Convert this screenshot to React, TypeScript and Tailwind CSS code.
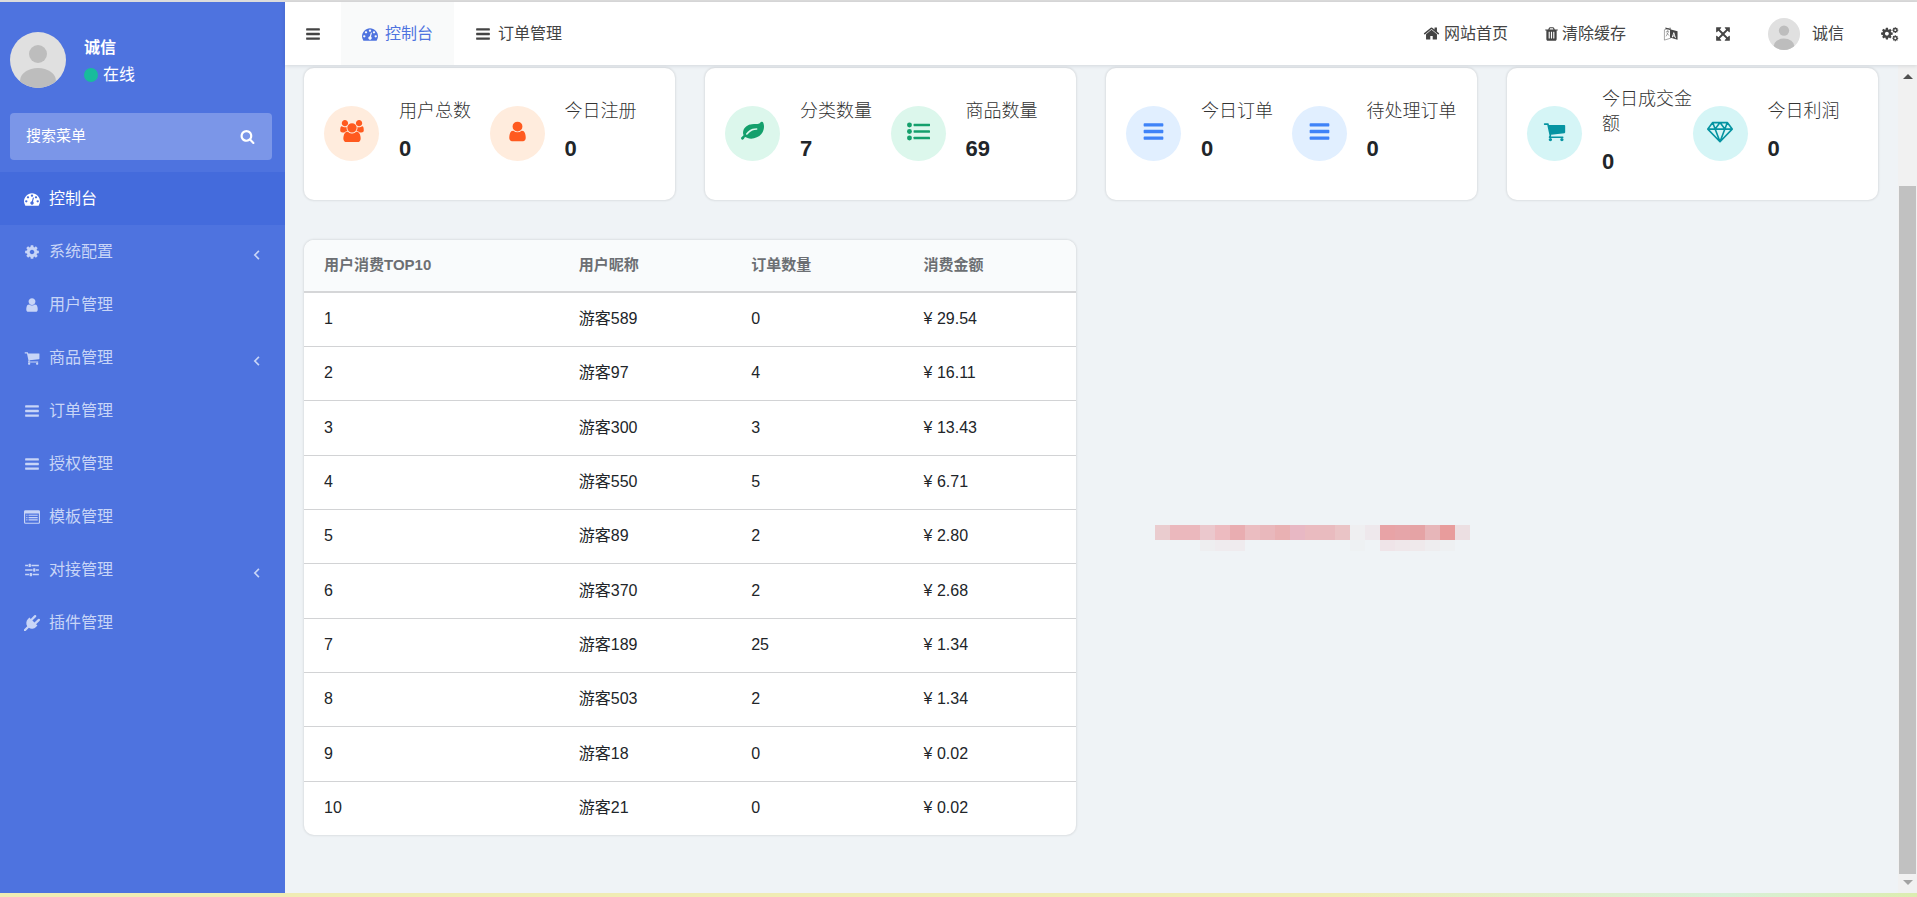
import { useState } from 'react'
import type { ReactNode } from 'react'

const COG =
  'M1152 896q0-106-75-181t-181-75-181 75-75 181 75 181 181 75 181-75 75-181zm512-109v222q0 12-8 23t-20 13l-185 28q-19 54-39 91 35 50 107 138 10 12 10 25t-9 23q-27 37-99 108t-94 71q-12 0-26-9l-138-108q-44 23-91 38-16 136-29 186-7 28-36 28h-222q-14 0-24.500-8.500t-11.500-21.500l-28-184q-49-16-90-37l-141 107q-10 9-25 9-14 0-25-11-126-114-165-168-7-10-7-23 0-12 8-23 15-21 51-66.500t54-70.500q-27-50-41-99l-183-27q-13-2-21-12.500t-8-23.500v-222q0-12 8-23t19-13l186-28q14-46 39-92-40-57-107-138-10-12-10-24 0-10 9-23 26-36 98.500-107.500t94.500-71.500q13 0 26 10l138 107q44-23 91-38 16-136 29-186 7-28 36-28h222q14 0 24.500 8.500t11.500 21.500l28 184q49 16 90 37l142-107q9-9 24-9 13 0 25 10 129 119 165 170 7 8 7 22 0 12-8 23-15 21-51 66.500t-54 70.500q26 50 41 98l183 28q13 2 21 12.500t8 23.500z'

const icons: Record<string, { box?: string; body: ReactNode }> = {
  bars: {
    body: <path d="M1664 1344v128q0 26-19 45t-45 19h-1408q-26 0-45-19t-19-45v-128q0-26 19-45t45-19h1408q26 0 45 19t19 45zm0-512v128q0 26-19 45t-45 19h-1408q-26 0-45-19t-19-45v-128q0-26 19-45t45-19h1408q26 0 45 19t19 45zm0-512v128q0 26-19 45t-45 19h-1408q-26 0-45-19t-19-45v-128q0-26 19-45t45-19h1408q26 0 45 19t19 45z" />,
  },
  dashboard: {
    body: <path d="M384 1152q0-53-37.500-90.500t-90.500-37.500-90.500 37.500-37.500 90.500 37.500 90.500 90.500 37.500 90.500-37.500 37.500-90.500zm192-448q0-53-37.500-90.500t-90.500-37.500-90.500 37.500-37.500 90.500 37.500 90.500 90.500 37.500 90.500-37.500 37.500-90.500zm428 481l101-382q6-26-7.500-48.500t-38.500-29.500-48 6.500-30 39.500l-101 382q-60 5-107 43.500t-63 98.500q-20 77 20 146t117 89 146-20 89-117q16-60-6-117t-72-91zm660-33q0-53-37.500-90.500t-90.500-37.500-90.500 37.500-37.500 90.500 37.500 90.500 90.500 37.500 90.500-37.500 37.500-90.500zm-640-640q0-53-37.500-90.500t-90.500-37.500-90.500 37.500-37.500 90.500 37.500 90.500 90.500 37.500 90.500-37.500 37.500-90.500zm448 192q0-53-37.500-90.500t-90.500-37.500-90.500 37.500-37.500 90.500 37.500 90.500 90.500 37.500 90.500-37.500 37.500-90.500zm320 448q0 261-141 483-19 29-54 29h-1402q-35 0-54-29-141-221-141-483 0-182 71-348t191-286 286-191 348-71 348 71 286 191 191 286 71 348z" />,
  },
  cog: { body: <path d={COG} /> },
  cogs: {
    box: '0 0 2048 1792',
    body: (
      <>
        <path transform="translate(-100 80) scale(.86)" d={COG} />
        <path transform="translate(1230 60) scale(.44)" d={COG} />
        <path transform="translate(1230 980) scale(.44)" d={COG} />
      </>
    ),
  },
  user: {
    body: <path d="M1536 1399q0 109-62.500 187t-150.500 78h-854q-88 0-150.500-78t-62.500-187q0-85 8.500-160.500t31.500-152 58.500-131 94-89 134.500-34.500q131 128 313 128t313-128q76 0 134.500 34.500t94 89 58.500 131 31.500 152 8.500 160.500zm-256-887q0 159-112.500 271.500t-271.500 112.500-271.500-112.500-112.500-271.500 112.500-271.500 271.500-112.500 271.500 112.500 112.500 271.500z" />,
  },
  users: {
    box: '-64 0 1920 1792',
    body: <path d="M529 896q-162 5-265 128h-134q-82 0-138-40.500t-56-118.500q0-353 124-353 6 0 43.500 21t97.500 42.500 119 21.500q67 0 133-23-5 37-5 66 0 139 81 256zm1071 637q0 120-73 189.500t-194 69.500h-874q-121 0-194-69.500t-73-189.500q0-53 3.500-103.500t14-109 26.500-108.500 43-97.500 62-81 85.500-53.500 111.500-20q10 0 43 21.500t73 48 107 48 135 21.500 135-21.500 107-48 73-48 43-21.500q61 0 111.500 20t85.500 53.500 62 81 43 97.500 26.500 108.500 14 109 3.500 103.500zm-1024-1277q0 106-75 181t-181 75-181-75-75-181 75-181 181-75 181 75 75 181zm704 384q0 159-112.500 271.500t-271.500 112.500-271.500-112.500-112.500-271.500 112.500-271.500 271.500-112.500 271.500 112.500 112.500 271.500zm576 225q0 78-56 118.500t-138 40.500h-134q-103-123-265-128 81-117 81-256 0-29-5-66 66 23 133 23 59 0 119-21.500t97.500-42.500 43.500-21q124 0 124 353zm-128-609q0 106-75 181t-181 75-181-75-75-181 75-181 181-75 181 75 75 181z" />,
  },
  cart: {
    body: <path d="M704 1536q0 52-38 90t-90 38-90-38-38-90 38-90 90-38 90 38 38 90zm896 0q0 52-38 90t-90 38-90-38-38-90 38-90 90-38 90 38 38 90zm128-1088v512q0 24-16.500 42.500t-40.500 21.500l-1044 122q13 60 13 70 0 16-24 64h920q26 0 45 19t19 45-19 45-45 19h-1024q-26 0-45-19t-19-45q0-11 8-31.500t16-36 21.500-40 15.500-29.500l-177-823h-204q-26 0-45-19t-19-45 19-45 45-19h256q16 0 28.500 6.500t19.500 15.500 13 24.500 8 26 5.500 29.500 4.500 26h1201q26 0 45 19t19 45z" />,
  },
  listAlt: {
    body: (
      <>
        <path fillRule="evenodd" d="M160 128h1472q160 0 160 160v1216q0 160-160 160h-1472q-160 0-160-160v-1216q0-160 160-160zm-32 384v960q0 64 64 64h1408q64 0 64-64v-960z" />
        <path d="M256 640h128v128h-128zM512 640h1024v128h-1024zM256 896h128v128h-128zM512 896h1024v128h-1024zM256 1152h128v128h-128zM512 1152h1024v128h-1024z" />
      </>
    ),
  },
  sliders: {
    body: <path d="M128 300h320v168h-320zM832 300h832v168h-832zM576 200h128q64 0 64 64v240q0 64-64 64h-128q-64 0-64-64v-240q0-64 64-64zM128 812h832v168h-832zM1344 812h320v168h-320zM1088 712h128q64 0 64 64v240q0 64-64 64h-128q-64 0-64-64v-240q0-64 64-64zM128 1324h448v168h-448zM960 1324h704v168h-704zM704 1224h128q64 0 64 64v240q0 64-64 64h-128q-64 0-64-64v-240q0-64 64-64z" />,
  },
  plug: {
    body: <path d="M1755 453q37 38 37 90.500t-37 90.500l-401 400 150 150-160 160q-163 163-389.500 186.500t-411.500-100.500l-362 362h-181v-181l362-362q-124-185-100.500-411.500t186.500-389.500l160-160 150 150 400-401q38-37 91-37t90 37 37 90.500-37 90.500l-400 401 234 234 401-400q38-37 91-37t90 37z" />,
  },
  search: {
    body: <path d="M1216 832q0-185-131.500-316.500t-316.500-131.500-316.500 131.500-131.500 316.500 131.500 316.500 316.500 131.500 316.500-131.500 131.500-316.500zm512 832q0 52-38 90t-90 38q-54 0-90-38l-343-342q-179 124-399 124-143 0-273.500-55.500t-225-150-150-225-55.500-273.500 55.500-273.500 150-225 225-150 273.500-55.500 273.500 55.500 225 150 150 225 55.500 273.500q0 220-124 399l343 343q37 37 37 90z" />,
  },
  home: {
    body: <path d="M1472 992v480q0 26-19 45t-45 19h-384v-384h-256v384h-384q-26 0-45-19t-19-45v-480q0-1 .5-3t.5-3l575-474 575 474q1 2 1 6zm223-69l-62 74q-8 9-21 11h-3q-13 0-21-7l-692-577-692 577q-12 8-24 7-13-2-21-11l-62-74q-8-10-7-23.500t11-21.500l719-599q32-26 76-26t76 26l244 204v-195q0-14 9-23t23-9h192q14 0 23 9t9 23v408l219 182q10 8 11 21.500t-7 23.500z" />,
  },
  trash: {
    box: '192 0 1408 1792',
    body: <path d="M704 1376v-704q0-14-9-23t-23-9h-64q-14 0-23 9t-9 23v704q0 14 9 23t23 9h64q14 0 23-9t9-23zm256 0v-704q0-14-9-23t-23-9h-64q-14 0-23 9t-9 23v704q0 14 9 23t23 9h64q14 0 23-9t9-23zm256 0v-704q0-14-9-23t-23-9h-64q-14 0-23 9t-9 23v704q0 14 9 23t23 9h64q14 0 23-9t9-23zm-544-992h448l-48-117q-7-9-17-11h-317q-10 2-17 11zm928 32v64q0 14-9 23t-23 9h-96v948q0 83-47 143.500t-113 60.500h-832q-66 0-113-58.500t-47-141.500v-952h-96q-14 0-23-9t-9-23v-64q0-14 9-23t23-9h309l70-167q15-37 54-63t79-26h320q40 0 79 26t54 63l70 167h309q14 0 23 9t9 23z" />,
  },
  language: {
    box: '0 0 16 16',
    body: (
      <>
        <path fill="none" stroke="currentColor" strokeWidth=".5" d="M1.500 3.500 8 1.500v11l-6.500 2zM3 5.800l3.500-1M4.800 4v1.200M6 5.500 3.200 10.500M3.800 7l3 2.800" />
        <path fillRule="evenodd" d="M7.500 3 15.500 5v9l-8-2.200zM11.200 6 9.400 11.300l1 .3.400-1.200 1.600.5.400 1.300 1 .3-1.800-6zM11.600 7.800l.5 2-1-.3z" />
        <path d="m2.500 1 5 1.500v1.300l-5-1.300z" />
      </>
    ),
  },
  arrows: {
    body: <path d="M1411 541l-355 355 355 355 144-144q29-31 70-14 39 17 39 59v448q0 26-19 45t-45 19h-448q-42 0-59-40-17-39 14-69l144-144-355-355-355 355 144 144q31 30 14 69-17 40-59 40h-448q-26 0-45-19t-19-45v-448q0-42 40-59 39-17 69 14l144 144 355-355-355-355-144 144q-19 19-45 19-12 0-24-5-40-17-40-59v-448q0-26 19-45t45-19h448q42 0 59 40 17 39-14 69l-144 144 355 355 355-355-144-144q-31-30-14-69 17-40 59-40h448q26 0 45 19t19 45v448q0 42-39 59-13 5-25 5-26 0-45-19z" />,
  },
  leaf: {
    body: <path d="M1280 704q0-26-19-45t-45-19q-172 0-318 49.500t-259.500 134-235.500 219.500q-19 21-19 45 0 26 19 45t45 19q24 0 45-19 27-24 74-71t67-66q137-124 268.500-176t313.500-52q26 0 45-19t19-45zm512-198q0 95-20 193-46 224-184.500 383t-357.500 268q-214 108-438 108-148 0-286-47-15-5-88-42t-96-37q-16 0-39.500 32t-45 70-52.500 70-60 32q-43 0-63.500-17.500t-45.500-59.500q-2-4-6-11t-5.500-10-3-9.500-1.500-13.500q0-35 31-73.500t68-65.500 68-56 31-48q0-4-14-38t-16-44q-9-51-9-104 0-115 43.500-220t119-184.500 170.500-139 204-95.500q55-18 145-25.500t179.500-9 178.500-6 163.500-24 113.500-56.500l29.500-29.500 29.500-28 27-20 36.500-16 43.500-4.500q39 0 70.500 46t47.500 112 24 124 8 96z" />,
  },
  listUl: {
    body: (
      <>
        <circle cx="192" cy="384" r="192" />
        <circle cx="192" cy="896" r="192" />
        <circle cx="192" cy="1408" r="192" />
        <rect x="512" y="288" width="1280" height="192" rx="32" />
        <rect x="512" y="800" width="1280" height="192" rx="32" />
        <rect x="512" y="1312" width="1280" height="192" rx="32" />
      </>
    ),
  },
  diamond: {
    box: '0 0 2048 1792',
    body: (
      <path fill="none" stroke="currentColor" strokeWidth="128" strokeLinejoin="round" d="M448 192h1152l384 512-960 1000-960-1000zM64 704h1920M1024 1704 640 704l384-512 384 512zM448 192l192 512M1600 192l-192 512" />
    ),
  },
  angleLeft: {
    body: <path fill="none" stroke="currentColor" strokeWidth="190" d="M1110 440 654 896l456 456" />,
  },
}

function Icon({ name, className }: { name: string; className: string }) {
  const { box, body } = icons[name]
  return (
    <svg viewBox={box ?? '0 0 1792 1792'} fill="currentColor" className={'shrink-0 ' + className} aria-hidden="true">
      {body}
    </svg>
  )
}

function Avatar({ className }: { className: string }) {
  return (
    <svg viewBox="0 0 56 56" className={'shrink-0 rounded-full ' + className} aria-hidden="true">
      <rect width="56" height="56" fill="#e0e0e0" />
      <circle cx="28" cy="22" r="9" fill="#bdbdbd" />
      <ellipse cx="28" cy="49" rx="18" ry="13" fill="#bdbdbd" />
    </svg>
  )
}

const menu = [
  { label: '控制台', icon: 'dashboard' },
  { label: '系统配置', icon: 'cog', sub: true },
  { label: '用户管理', icon: 'user' },
  { label: '商品管理', icon: 'cart', sub: true },
  { label: '订单管理', icon: 'bars' },
  { label: '授权管理', icon: 'bars' },
  { label: '模板管理', icon: 'listAlt' },
  { label: '对接管理', icon: 'sliders', sub: true },
  { label: '插件管理', icon: 'plug' },
]

const cards = [
  {
    tone: 'bg-[#ffecdd] text-[#ff5a1f]',
    stats: [
      { label: '用户总数', value: '0', icon: 'users' },
      { label: '今日注册', value: '0', icon: 'user' },
    ],
  },
  {
    tone: 'bg-[#dcf7ec] text-[#14a06c]',
    stats: [
      { label: '分类数量', value: '7', icon: 'leaf' },
      { label: '商品数量', value: '69', icon: 'listUl' },
    ],
  },
  {
    tone: 'bg-[#e1efff] text-[#3f83f8]',
    stats: [
      { label: '今日订单', value: '0', icon: 'bars' },
      { label: '待处理订单', value: '0', icon: 'bars' },
    ],
  },
  {
    tone: 'bg-[#d5f5f6] text-[#0694a2]',
    stats: [
      { label: '今日成交金额', value: '0', icon: 'cart' },
      { label: '今日利润', value: '0', icon: 'diamond' },
    ],
  },
]

const rows = [
  ['1', '游客589', '0', '¥ 29.54'],
  ['2', '游客97', '4', '¥ 16.11'],
  ['3', '游客300', '3', '¥ 13.43'],
  ['4', '游客550', '5', '¥ 6.71'],
  ['5', '游客89', '2', '¥ 2.80'],
  ['6', '游客370', '2', '¥ 2.68'],
  ['7', '游客189', '25', '¥ 1.34'],
  ['8', '游客503', '2', '¥ 1.34'],
  ['9', '游客18', '0', '¥ 0.02'],
  ['10', '游客21', '0', '¥ 0.02'],
]

// masked strip, one colour per block
const mask = [
  ['bg-[#eacccf]', ''],
  ['bg-[#ebb8bd]', ''],
  ['bg-[#ebb8bd]', ''],
  ['bg-[#ebc8cd]', 'bg-[#eeeef0]'],
  ['bg-[#edbbc0]', 'bg-[#efebee]'],
  ['bg-[#e9adb1]', 'bg-[#efebee]'],
  ['bg-[#ebbdc1]', ''],
  ['bg-[#e9b8bc]', ''],
  ['bg-[#e9b1b3]', ''],
  ['bg-[#e8b8c4]', ''],
  ['bg-[#eabbc0]', ''],
  ['bg-[#e9bbbf]', ''],
  ['bg-[#eac4c6]', ''],
  ['bg-[#efeff1]', 'bg-[#eef1f3]'],
  ['bg-[#eee8ec]', ''],
  ['bg-[#e8a3a6]', 'bg-[#efe4e8]'],
  ['bg-[#e6a5a9]', 'bg-[#efe7ea]'],
  ['bg-[#e5a3a5]', 'bg-[#efe9eb]'],
  ['bg-[#e7b6b9]', 'bg-[#eeedef]'],
  ['bg-[#e89c9c]', 'bg-[#eef0f2]'],
  ['bg-[#ecdfe2]', ''],
]

function Sidebar() {
  const [active, setActive] = useState('控制台')
  return (
    <aside className="w-[285px] shrink-0 bg-[#4e73df] text-white">
      <div className="flex items-center gap-[18px] px-[10px] pt-[30px]">
        <Avatar className="size-14" />
        <div className="pt-[2px]">
          <p className="text-base leading-[27px] font-bold">诚信</p>
          <p className="flex items-center gap-[5px] text-base leading-[27px]">
            <span className="size-[14px] rounded-full bg-[#18bc9c]" />
            在线
          </p>
        </div>
      </div>
      <form className="mx-[10px] mt-[25px] mb-3 flex h-[47px] w-[262px] items-center rounded bg-[#7b96e8]">
        <input aria-label="搜索菜单" placeholder="搜索菜单" className="min-w-0 flex-1 bg-transparent pl-4 text-[15px] outline-none placeholder:text-white" />
        <button type="button" aria-label="搜索" className="px-[17px]">
          <Icon name="search" className="size-[15px]" />
        </button>
      </form>
      <nav>
        {menu.map((item) => (
          <button
            key={item.label}
            onClick={() => setActive(item.label)}
            className={'flex h-[53px] w-full items-center gap-[9px] pt-[1px] pr-5 pl-6 text-base ' + (active === item.label ? 'bg-[#446bdc] text-white' : 'text-[#c8d5f7]')}
          >
            <Icon name={item.icon} className="size-4" />
            <span>{item.label}</span>
            {item.sub && <Icon name="angleLeft" className="mt-[6px] ml-auto size-4" />}
          </button>
        ))}
      </nav>
    </aside>
  )
}

function Header() {
  return (
    <header className="z-10 flex h-[63px] shrink-0 items-stretch bg-white pr-[18px] text-base text-[#444] shadow-[0_1px_4px_rgba(0,21,41,0.12)]">
      <button aria-label="菜单" className="px-5">
        <Icon name="bars" className="size-4" />
      </button>
      <a href="#dashboard" className="flex items-center gap-[7px] bg-[#f9fafa] px-[21px] text-[#4e73df]">
        <Icon name="dashboard" className="size-4" />
        控制台
      </a>
      <a href="#orders" className="flex items-center gap-[7px] px-[21px]">
        <Icon name="bars" className="size-4" />
        订单管理
      </a>
      <div className="ml-auto flex items-center gap-[37px]">
        <a href="#home" className="flex items-center gap-1">
          <Icon name="home" className="size-[17px]" />
          网站首页
        </a>
        <button className="flex items-center gap-1">
          <Icon name="trash" className="h-4 w-[13px]" />
          清除缓存
        </button>
        <button aria-label="语言">
          <Icon name="language" className="h-4 w-[15px]" />
        </button>
        <button aria-label="全屏">
          <Icon name="arrows" className="size-4" />
        </button>
        <button className="flex items-center gap-3">
          <Avatar className="size-8" />
          诚信
        </button>
        <button aria-label="设置">
          <Icon name="cogs" className="h-4 w-[18px]" />
        </button>
      </div>
    </header>
  )
}

function Scrollbar() {
  return (
    <div className="flex w-[19px] shrink-0 flex-col items-center bg-[#f1f1f1] py-2" aria-hidden="true">
      <svg viewBox="0 0 10 5" className="mt-[1px] h-[5px] w-[10px] fill-[#505050]"><path d="M0 5 5 0l5 5z" /></svg>
      <div className="flex min-h-0 flex-1 flex-col self-stretch px-[1px] pt-[107px] pb-[6px]">
        <div className="flex-1 bg-[#c1c1c1]" />
      </div>
      <svg viewBox="0 0 10 5" className="h-[5px] w-[10px] fill-[#a3a3a3]"><path d="M0 0l5 5 5-5z" /></svg>
    </div>
  )
}

export default function App() {
  return (
    <div className="flex h-screen flex-col overflow-hidden bg-[#eff3f6] font-['Liberation_Sans','Noto_Sans_CJK_SC',sans-serif]">
      <div className="h-[2px] shrink-0 bg-[#dcdcdc]" />
      <div className="flex min-h-0 flex-1">
        <Sidebar />
        <div className="flex min-w-0 flex-1 flex-col">
          <Header />
          <div className="flex min-h-0 flex-1">
            <main className="min-w-0 flex-1 pt-[3px] pr-5 pl-[19px]">
              <section className="grid grid-cols-4 gap-[30px]">
                {cards.map((card) => (
                  <div key={card.tone} className="grid h-[132px] grid-cols-2 items-center rounded-[10px] bg-white px-5 pb-[2px] shadow-[0_0_2px_1px_rgba(0,0,0,0.08)]">
                    {card.stats.map((s) => (
                      <div key={s.label} className="flex items-center gap-5">
                        <div className={'flex size-[55px] shrink-0 items-center justify-center rounded-full pb-1 ' + card.tone}>
                          <Icon name={s.icon} className={s.icon === 'diamond' ? 'h-[23px] w-[26px]' : s.icon === 'users' ? 'h-[22px] w-6' : 'size-[23px]'} />
                        </div>
                        <div>
                          <p className="mb-[7px] text-lg leading-[25px] font-light text-[#333]">{s.label}</p>
                          <p className="text-[22px] leading-9 font-bold text-[#212529]">{s.value}</p>
                        </div>
                      </div>
                    ))}
                  </div>
                ))}
              </section>
              <section className="mt-10 grid grid-cols-2 items-start gap-[30px]">
                <div className="overflow-hidden rounded-[10px] bg-white shadow-[0_0_2px_1px_rgba(0,0,0,0.08)]">
                  <table className="w-full table-fixed border-collapse text-left">
                    <thead>
                      <tr className="h-[52px] border-b-2 border-[#d5d6d8] bg-[#f9fbfc] text-[15px] text-[#6c6f73]">
                        <th className="w-[33%] pl-5 font-bold">用户消费TOP10</th>
                        <th className="pl-5 font-bold">用户昵称</th>
                        <th className="pl-5 font-bold">订单数量</th>
                        <th className="pl-5 font-bold">消费金额</th>
                      </tr>
                    </thead>
                    <tbody>
                      {rows.map((row) => (
                        <tr key={row[0]} className="h-[54px] border-b border-[#d2d3d5] text-base text-[#212529] last:border-b-0 nth-[3n]:h-[55px]">
                          {row.map((cell, i) => (
                            <td key={i} className="pl-5">{cell}</td>
                          ))}
                        </tr>
                      ))}
                    </tbody>
                  </table>
                </div>
                <div className="flex pt-[285px] pl-[49px]" aria-hidden="true">
                  {mask.map(([top, bottom], i) => (
                    <div key={i} className="w-[15px]">
                      <div className={'h-[15px] ' + top} />
                      <div className={'h-[11px] ' + bottom} />
                    </div>
                  ))}
                </div>
              </section>
            </main>
            <Scrollbar />
          </div>
        </div>
      </div>
      <div className="h-1 shrink-0 bg-linear-to-r from-[#f0ecb4] from-70% via-[#d8f0d8] via-90% to-[#dcedb0]" />
    </div>
  )
}
